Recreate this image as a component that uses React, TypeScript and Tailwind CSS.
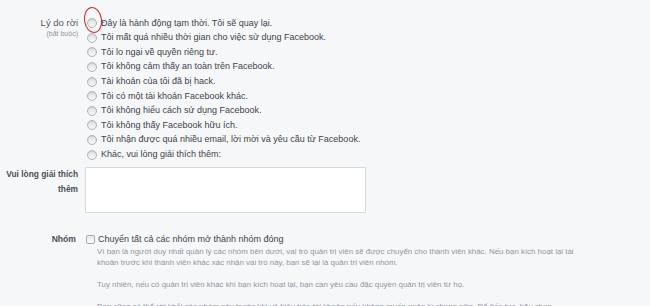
import React from "react";

const reasons = [
  "Đây là hành động tạm thời. Tôi sẽ quay lại.",
  "Tôi mất quá nhiều thời gian cho việc sử dụng Facebook.",
  "Tôi lo ngại về quyền riêng tư.",
  "Tôi không cảm thấy an toàn trên Facebook.",
  "Tài khoản của tôi đã bị hack.",
  "Tôi có một tài khoản Facebook khác.",
  "Tôi không hiểu cách sử dụng Facebook.",
  "Tôi không thấy Facebook hữu ích.",
  "Tôi nhận được quá nhiều email, lời mời và yêu cầu từ Facebook.",
  "Khác, vui lòng giải thích thêm:",
];

function Radio() {
  return (
    <span className="w-[10px] h-[10px] flex-shrink-0 rounded-full border border-[#b1b3b6] bg-gradient-to-b from-[#dfe0e2] to-[#f8f8f9] shadow-[inset_0_1px_1px_rgba(0,0,0,0.08)]" />
  );
}

function Checkbox() {
  return (
    <span className="w-[9px] h-[9px] flex-shrink-0 rounded-[2px] border border-[#a9abae] bg-gradient-to-b from-[#e8e9ea] to-[#fcfcfc]" />
  );
}

export default function App() {
  return (
    <div className="relative w-[650px] h-[306px] overflow-hidden bg-[#f6f7f9] text-[9px] text-[#3e4249] font-['Liberation_Sans',Arial,sans-serif]">
      {/* red annotation round the first radio */}
      <svg className="absolute left-0 top-0" width="120" height="40" aria-hidden>
        <ellipse cx="93" cy="20" rx="8.5" ry="12.5" fill="none" stroke="#c8333a" strokeWidth="1.1" transform="rotate(-8 93 20)" />
      </svg>

      {/* Lý do rời */}
      <div className="flex pt-[16px]">
        <div className="w-[78px] flex-shrink-0 text-right whitespace-nowrap">
          <div className="leading-[14.6px] text-[9.5px] text-[#555960]">Lý do rời</div>
          <div className="-mt-[2px] leading-[9px] text-[7px] text-[#90949c]">(bắt buộc)</div>
        </div>
        <div className="ml-[9px] flex flex-col">
          {reasons.map((r) => (
            <label key={r} className="flex items-center gap-[4px] h-[14.6px] whitespace-nowrap">
              <Radio />
              <span>{r}</span>
            </label>
          ))}
        </div>
      </div>

      {/* Vui lòng giải thích thêm */}
      <div className="flex mt-[5px]">
        <div className="w-[78px] flex-shrink-0 text-right font-bold text-[8.4px] text-[#4b4f56] leading-[15px] whitespace-nowrap">
          Vui lòng giải thích
          <br />
          thêm
        </div>
        <textarea className="ml-[7px] w-[281px] h-[46px] resize-none bg-white border border-[#d8dade] outline-none" />
      </div>

      {/* Nhóm */}
      <div className="flex mt-[20px]">
        <div className="w-[78px] flex-shrink-0 pr-[2px] text-right font-bold text-[8.6px] text-[#4b4f56] leading-[13px]">Nhóm</div>
        <div className="ml-[8px]">
          <label className="flex items-center gap-[3px] h-[13px] whitespace-nowrap">
            <Checkbox />
            <span>Chuyển tất cả các nhóm mở thành nhóm đóng</span>
          </label>
          <div className="pl-[11px] text-[7.9px] leading-[11px] text-[#92969e] whitespace-nowrap">
            <p>
              Vì bạn là người duy nhất quản lý các nhóm bên dưới, vai trò quản trị viên sẽ được chuyển cho thành viên khác. Nếu bạn kích hoạt lại tài
              <br />
              khoản trước khi thành viên khác xác nhận vai trò này, bạn sẽ lại là quản trị viên nhóm.
            </p>
            <p className="mt-[11px]">
              Tuy nhiên, nếu có quản trị viên khác khi bạn kích hoạt lại, bạn cần yêu cầu đặc quyền quản trị viên từ họ.
            </p>
            <p className="mt-[11px]">
              Bạn cũng có thể rời khỏi các nhóm này trước khi vô hiệu hóa tài khoản nếu không muốn quản lý chúng nữa. Để tiếp tục, hãy chọn
            </p>
          </div>
        </div>
      </div>
    </div>
  );
}
